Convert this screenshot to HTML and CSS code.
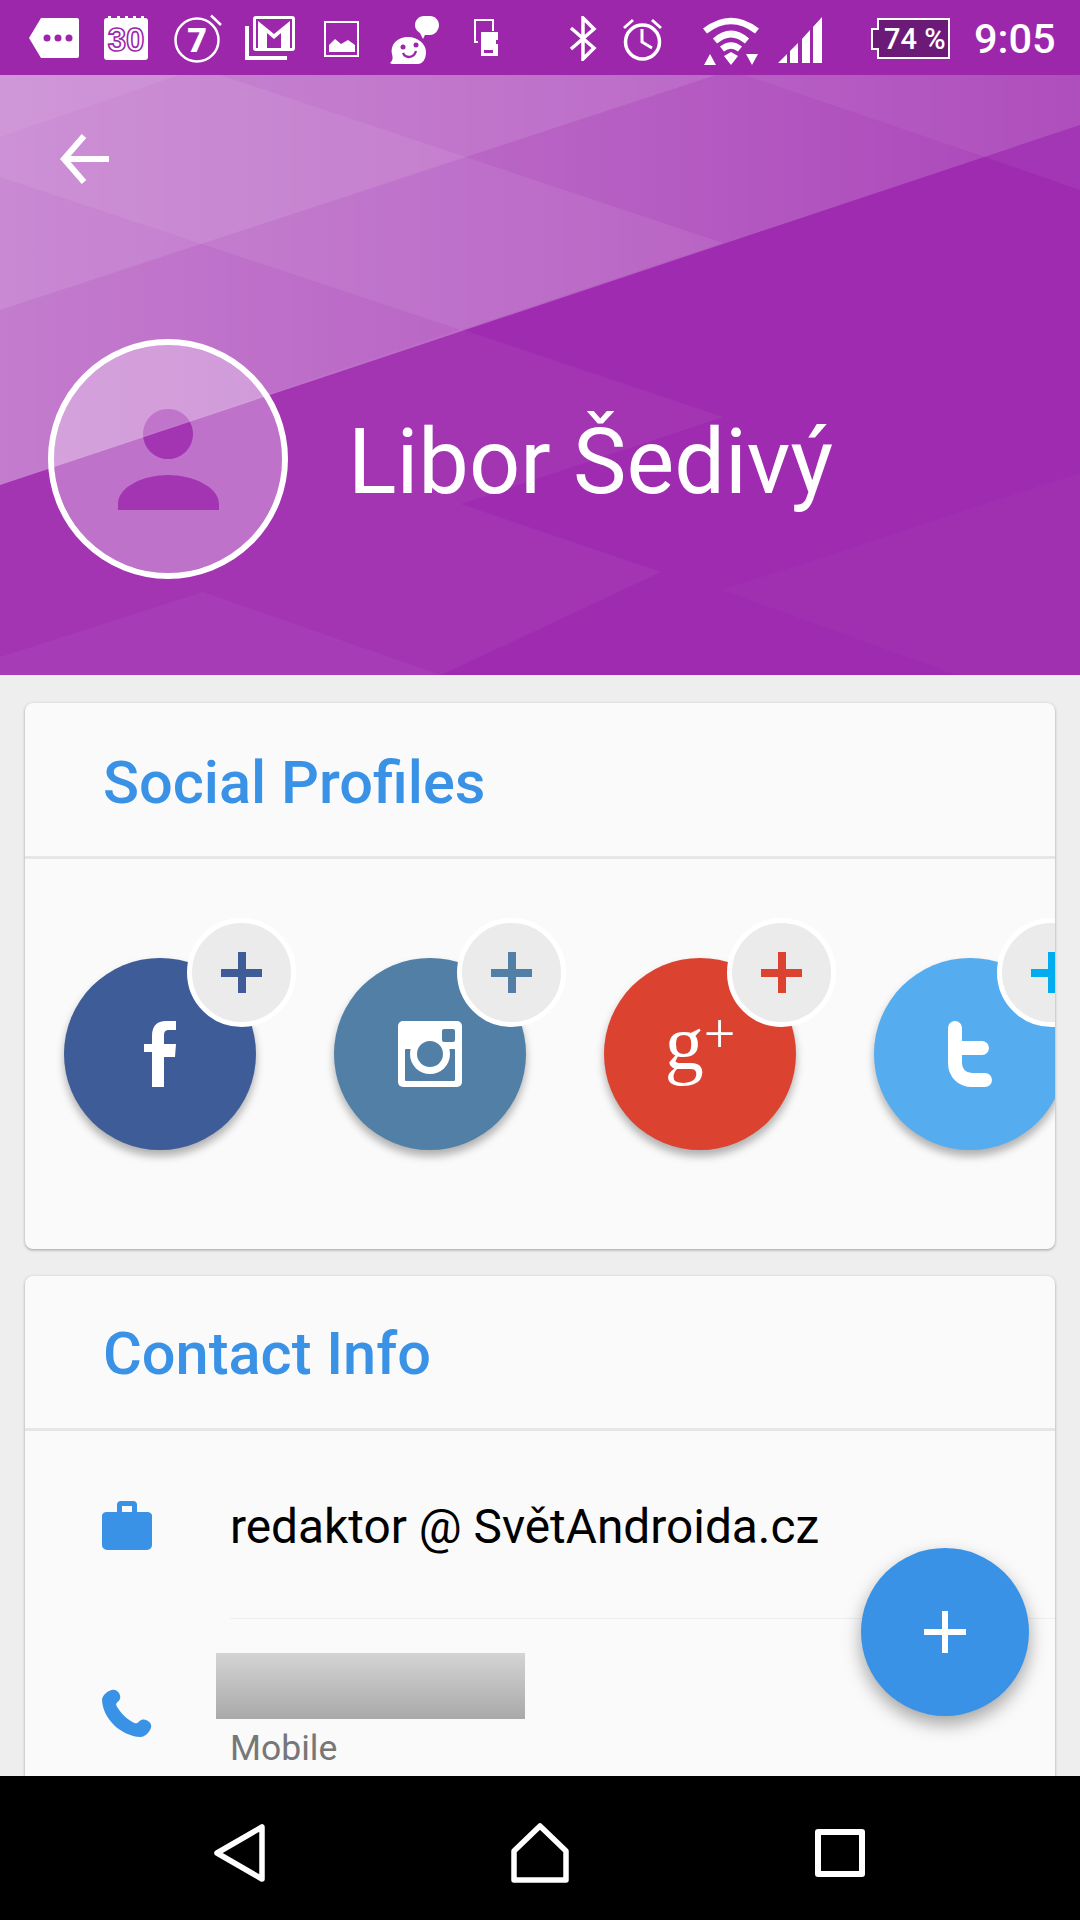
FILE: index.html
```html
<!DOCTYPE html>
<html>
<head>
    <title>Libor Šedivý - Contact</title>
    <link rel="stylesheet" href="styles.css">
</head>
<body>
    <div class="status-bar">
        <svg class="si si-tag" width="50" height="40" viewBox="0 0 50 40"><path d="M12 0H48a2 2 0 0 1 2 2V38a2 2 0 0 1-2 2H12L0 20Z" fill="#fff"/><g fill="#9c27ab"><circle cx="18" cy="20" r="3.5"/><circle cx="29" cy="20" r="3.5"/><circle cx="40" cy="20" r="3.5"/></g></svg>
        <svg class="si si-cal" width="44" height="44" viewBox="0 0 44 44"><rect y="2" width="44" height="42" rx="3" fill="#fff"/><path d="M4 0h3v3H4zM13 0h3v3h-3zM21 0h3v3h-3zM29 0h3v3h-3zM37 0h3v3h-3z" fill="#fff"/><text class="cal-num" x="22" y="35" text-anchor="middle">30</text></svg>
        <svg class="si si-timer" width="48" height="49" viewBox="0 0 48 49"><circle cx="23" cy="26" r="21.5" fill="none" stroke="#fff" stroke-width="2.5"/><path d="M37 1.500 47 11" stroke="#fff" stroke-width="2.5" fill="none"/><text class="timer-num" x="23" y="38" text-anchor="middle">7</text></svg>
        <svg class="si si-mail" width="50" height="44" viewBox="0 0 50 44"><path d="M2 10V42H42" fill="none" stroke="#fff" stroke-width="4"/><rect x="8" width="42" height="35" rx="3" fill="#fff"/><rect x="11" y="3" width="36" height="29" fill="#9c27ab"/><path d="M13 5 29 18 45 5V32H36V17L29 23 22 17V32H13Z" fill="#fff"/></svg>
        <svg class="si si-image" width="35" height="36" viewBox="0 0 35 36"><rect x="1" y="1" width="33" height="34" fill="none" stroke="#fff" stroke-width="2"/><path d="M5 31V24L11 18 17 23 24 19 31 24V31Z" fill="#fff"/></svg>
        <svg class="si si-chat" width="49" height="48" viewBox="0 0 49 48"><path d="M0 47C3 44 3 42 2 38 0 28 8 21 18 21S36 28 36 36 32 48 28 48H2Z" fill="#fff"/><path d="M30 17C26 14 25 12 25 9 25 4 29 0 34 0H40C45 0 49 4 49 9S45 19 40 19H35L33 23Z" fill="#fff"/><g fill="none" stroke="#9c27ab" stroke-width="2.4"><path d="M13 37C16 43 24 42 26 35"/></g><circle cx="13" cy="31" r="2.5" fill="#9c27ab"/><circle cx="26" cy="29" r="2.5" fill="#9c27ab"/></svg>
        <svg class="si si-sd" width="24" height="37" viewBox="0 0 24 37"><path d="M19 12V1H1V23H4" fill="none" stroke="#fff" stroke-width="2"/><path d="M7 13H24V21H22V25H24V37H7Z" fill="#fff"/><path d="M10 31h9v3h-9z" fill="#9c27ab"/></svg>

        <svg class="si si-bt" width="28" height="45" viewBox="0 0 28 45"><path d="M2 12 25 32 14 43V2L25 13 2 33" fill="none" stroke="#fff" stroke-width="3.500"/></svg>
        <svg class="si si-alarm" width="41" height="45" viewBox="0 0 41 45"><circle cx="20.500" cy="26" r="17" fill="none" stroke="#fff" stroke-width="3.5"/><path d="M20 13V26L30 32M2 12 11 4M30 4 39 12" fill="none" stroke="#fff" stroke-width="3"/></svg>
        <svg class="si si-wifi" width="58" height="50" viewBox="0 0 58 50"><g fill="none" stroke="#fff" stroke-width="6.500"><path d="M3 15Q29 -5 55 15"/><path d="M13 25Q29 11 45 25"/><path d="M20 33Q29 26 38 33"/></g><path d="M2 49 8 38 14 49ZM44 38H56L50 49ZM22 40 29 36 36 40 29 49Z" fill="#fff"/></svg>
        <svg class="si si-signal" width="44" height="46" viewBox="0 0 44 46"><path d="M0 46 9 37V46ZM12 46V34L20 26V46ZM24 46V22L32 13V46ZM35 46V10L44 0V46Z" fill="#fff"/></svg>
        <svg class="si si-battery" width="80" height="41" viewBox="0 0 80 41"><path d="M8 1H79V40H8V31H2V11H8Z" fill="#6c1a78" stroke="#fff" stroke-width="2"/><text class="batt-num" x="14" y="31">74 %</text></svg>
        <span class="clock">9:05</span>
    </div>

    <header class="profile-head">
        <svg class="head-bg" width="1080" height="600" viewBox="0 75 1080 600" preserveAspectRatio="none">
            <defs>
                <linearGradient id="fade" gradientUnits="userSpaceOnUse" x1="0" y1="0" x2="1080" y2="0">
                    <stop offset="0" stop-color="#fff" stop-opacity=".38"/>
                    <stop offset=".5" stop-color="#fff" stop-opacity=".26"/>
                    <stop offset="1" stop-color="#fff" stop-opacity=".12"/>
                </linearGradient>
            </defs>
            <path d="M0 75H1080V125L0 485Z" fill="url(#fade)"/>
            <path d="M0 75H716L0 310Z" fill="#fff" fill-opacity=".1"/>
            <path d="M0 75H220L723 243 461 330 0 177Z" fill="#fff" fill-opacity=".07"/>
            <path d="M0 75H179L0 137Z" fill="#fff" fill-opacity=".06"/>
            <path d="M744 75H1080V190L985 157Z" fill="#fff" fill-opacity=".05"/>
            <path d="M0 484 461 329 723 417 461 504 661 572 441 675H0Z" fill="#fff" fill-opacity=".045"/>
            <path d="M0 657 203 592 441 675H0Z" fill="#fff" fill-opacity=".04"/>
            <path d="M723 590 1080 473V675H957Z" fill="#fff" fill-opacity=".025"/>
        </svg>
        <button class="back-btn">
            <svg width="50" height="50" viewBox="0 0 50 50"><path d="M49 25H4M24 2 4 25 24 48" fill="none" stroke="#fff" stroke-width="6"/></svg>
        </button>
        <div class="profile-row">
            <svg class="avatar" width="240" height="240" viewBox="0 0 240 240"><path d="M120 6a114 114 0 1 0 .01 0ZM120 70a25 25 0 1 0 .01 0ZM70 171V165C70 148 95 136 120 136S171 148 171 165V171Z" fill="#fff" fill-opacity=".3" fill-rule="evenodd"/><circle cx="120" cy="120" r="117" fill="none" stroke="#fff" stroke-width="6"/></svg>
            <h1 class="profile-name">Libor Šedivý</h1>
        </div>
    </header>

    <main class="content">
        <section class="card card-social">
            <h2 class="card-title">Social Profiles</h2>
            <div class="social-row">
                <div class="social fb">
                    <svg width="32" height="66" viewBox="0 0 32 66"><path d="M8 66V31H0V23H8V15C8 5 13 0 22 0H32V9H25C21 9 20 11 20 15V23H32L31 36H20V66Z" fill="#fff"/></svg>
                    <span class="badge"><i class="plus"></i></span>
                </div>
                <div class="social ig">
                    <svg width="64" height="66" viewBox="0 0 64 66"><rect width="64" height="66" rx="5" fill="#fff"/><rect x="7" y="28" width="50" height="32" rx="1" fill="#517fa6"/><circle cx="32" cy="33" r="20" fill="#fff"/><circle cx="32" cy="33" r="13" fill="#517fa6"/><rect x="44" y="8" width="13" height="13" rx="2" fill="#517fa6"/></svg>
                    <span class="badge"><i class="plus"></i></span>
                </div>
                <div class="social gp">
                    <span class="gp-mark">g<span class="gp-plus">+</span></span>
                    <span class="badge"><i class="plus"></i></span>
                </div>
                <div class="social tw">
                    <svg width="44" height="66" viewBox="0 0 44 66"><path d="M7 7V42C7 52 14 59 24 59H37M7 27H34" fill="none" stroke="#fff" stroke-width="14" stroke-linecap="round"/></svg>
                    <span class="badge"><i class="plus"></i></span>
                </div>
            </div>
        </section>

        <section class="card card-contact">
            <h2 class="card-title">Contact Info</h2>
            <div class="contact-row">
                <svg class="contact-icon" width="50" height="49" viewBox="0 0 50 49"><path d="M15 11V4a4 4 0 0 1 4-4H31a4 4 0 0 1 4 4V11H45a5 5 0 0 1 5 3V44a5 5 0 0 1-5 5H5a5 5 0 0 1-5-5V14a5 5 0 0 1 5-3ZM20 5V11H30V5Z" fill="#3a92e6" fill-rule="evenodd"/></svg>
                <div class="contact-body line">
                    <span class="contact-main">redaktor @ SvětAndroida.cz</span>
                </div>
            </div>
            <div class="contact-row">
                <svg class="contact-icon" width="50" height="48" viewBox="0 0 24 24" preserveAspectRatio="none"><path d="M4.600 0.500C6 0 7.500 0.800 8.300 2.300 9 3.800 9 5 8 6 7.200 6.800 6.500 7.300 7 8.500 8.800 12 12 15.200 15.500 17 16.700 17.500 17.200 16.800 18 16 19 15 20.200 15 21.700 15.700 23.200 16.500 24 18 23.500 19.400 22.800 21.800 20.500 24 18.500 24 9 23.500 0.500 15 0 5.500 0 3.500 2.200 1.200 4.600 0.500Z" fill="#3a92e6"/></svg>
                <div class="contact-body">
                    <div class="redacted"></div>
                    <span class="contact-label">Mobile</span>
                </div>
            </div>
        </section>
    </main>

    <button class="fab"><i class="fab-plus"></i></button>

    <nav class="nav-bar">
        <svg width="52" height="58" viewBox="0 0 52 58"><path d="M48 3V55L3 29Z" fill="none" stroke="#fff" stroke-width="5.500" stroke-linejoin="round"/></svg>
        <svg width="58" height="60" viewBox="0 0 58 60"><path d="M3 28 29 3 55 28V57H3Z" fill="none" stroke="#fff" stroke-width="5.500" stroke-linejoin="round"/></svg>
        <svg width="50" height="48" viewBox="0 0 50 48"><rect x="3" y="3" width="44" height="42" fill="none" stroke="#fff" stroke-width="6" stroke-linejoin="round"/></svg>
    </nav>
</body>
</html>
```

FILE: styles.css
```css
* { box-sizing: border-box; }
html, body { margin: 0; padding: 0; }
body { position: relative; width: 1080px; height: 1920px; overflow: hidden; background: #eee; font-family: Roboto, "Noto Sans", sans-serif; display: flex; flex-direction: column; }

/* status bar */
.status-bar { height: 75px; flex: none; background: #9c27ab; display: flex; align-items: center; padding-left: 29px; color: #fff; }
.si { flex: none; display: block; }
.si-cal { margin-left: 25px; }
.si-timer { margin-left: 26px; margin-top: 2px; }
.si-mail { margin-left: 23px; }
.si-image { margin-left: 29px; margin-top: 2px; }
.si-chat { margin-left: 31px; margin-top: 5px; }
.si-sd { margin-left: 35px; }
.si-bt { margin-left: 71px; margin-top: 2px; }
.si-alarm { margin-left: 25px; margin-top: 2px; }
.si-wifi { margin-left: 39px; margin-top: 7px; }
.si-signal { margin-left: 18px; margin-top: 5px; }
.si-battery { margin-left: 48px; margin-top: 2px; }
.clock { margin-left: 24px; font-size: 41.5px; font-weight: 500; line-height: 1; margin-top: 2px; }
.cal-num { font: bold 33px "Liberation Sans", sans-serif; fill: #fff; stroke: #9c27ab; stroke-width: 1.6; }
.timer-num { font: 900 34px Roboto, sans-serif; fill: #fff; }
.batt-num { font: 500 29px Roboto, sans-serif; fill: #fff; }

/* purple header */
.profile-head { position: relative; height: 600px; flex: none; background: #9f2cb0; overflow: hidden; }
.head-bg { position: absolute; left: 0; top: 0; }
.back-btn { position: absolute; left: 60px; top: 59px; width: 50px; height: 50px; padding: 0; border: 0; background: none; }
.back-btn svg { display: block; }
.profile-row { position: absolute; left: 48px; top: 264px; display: flex; align-items: center; }
.avatar { flex: none; display: block; }
.profile-name { margin: 8px 0 0 60px; font-size: 90px; font-weight: 400; color: #fff; line-height: 1; white-space: nowrap; }

/* cards */
.content { flex: 1; min-height: 0; overflow: hidden; padding: 28px 25px 0; }
.card { background: #fafafa; border-radius: 8px; box-shadow: 0 1px 3px rgba(0,0,0,.35); overflow: hidden; }
.card-social { height: 546px; }
.card-contact { margin-top: 27px; height: 600px; }
.card-title { margin: 0; height: 156px; padding: 6px 0 0 78px; display: flex; align-items: center; font-size: 59.5px; font-weight: 500; color: #3a92e6; border-bottom: 3px solid #e6e6e6; }
.card-contact .card-title { height: 155px; padding-top: 3px; }

/* social circles */
.social-row { display: flex; gap: 78px; padding: 99px 0 0 39px; overflow: hidden; height: 390px; }
.social { position: relative; flex: none; width: 192px; height: 192px; border-radius: 50%; box-shadow: 0 6px 8px rgba(0,0,0,.3); display: flex; align-items: center; justify-content: center; color: #fff; }
.fb { background: #3d5c98; --brand: #3d5c98; }
.ig { background: #517fa6; --brand: #517fa6; }
.gp { background: #db4230; --brand: #db4230; }
.tw { background: #55acee; --brand: #00aced; }
.badge { position: absolute; left: 123px; top: -40px; width: 109px; height: 109px; border-radius: 50%; background: #ebebeb; border: 5px solid #fff; display: flex; align-items: center; justify-content: center; }
.plus { position: relative; display: block; width: 41px; height: 8px; background: var(--brand); }
.plus::after { content: ""; position: absolute; left: 16.500px; top: -16.500px; width: 8px; height: 41px; background: var(--brand); }
.gp-mark { font: 78px/1 "Liberation Serif", serif; margin-top: -22px; position: relative; left: 0; }
.gp-plus { font-size: 56px; position: relative; top: -16px; }

/* contact rows */
.contact-row { display: flex; align-items: center; height: 188px; padding-left: 77px; }
.contact-row + .contact-row { height: 187px; }
.contact-icon { flex: none; display: block; }
.contact-body { flex: 1; height: 100%; margin-left: 78px; display: flex; flex-direction: column; }
.contact-body.line { justify-content: center; padding-top: 6px; border-bottom: 1px solid #eee; }
.contact-main { font-size: 47.8px; color: #000; line-height: 1; }
.redacted { width: 309px; height: 66px; margin: 34px 0 0 -14px; flex: none; background: linear-gradient(#d4d4d4, #a9a9a9); }
.contact-label { font-size: 35.5px; color: #777; line-height: 40px; margin-top: 9px; }

/* floating button */
.fab { position: absolute; left: 861px; top: 1548px; width: 168px; height: 168px; padding: 0; border: 0; border-radius: 50%; background: #3a92e6; box-shadow: 0 8px 18px rgba(0,0,0,.35); display: flex; align-items: center; justify-content: center; }
.fab-plus { position: relative; display: block; width: 42px; height: 6px; background: #fff; }
.fab-plus::after { content: ""; position: absolute; left: 18px; top: -18px; width: 6px; height: 42px; background: #fff; }

/* nav bar */
.nav-bar { height: 144px; flex: none; background: #000; display: grid; grid-template-columns: repeat(3, 300px); padding: 10px 90px 0; align-items: center; justify-items: center; position: relative; }
```
